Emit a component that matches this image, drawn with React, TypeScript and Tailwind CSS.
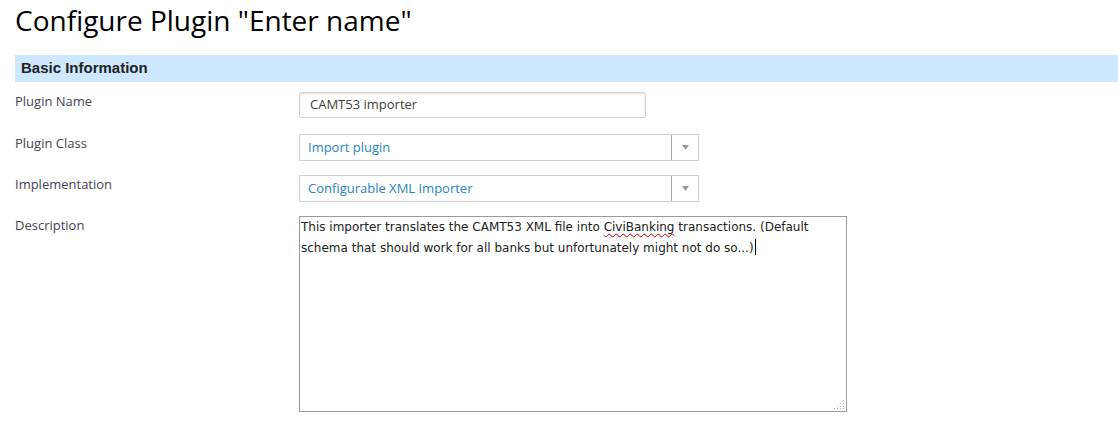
import { ReactNode } from 'react'

const labelFont = { fontFamily: '"Open Sans", sans-serif' }

function Row({ label, children, className }: { label: string; children: ReactNode; className?: string }) {
  return (
    <div className={`flex ${className ?? ''}`}>
      <div className="w-[284px] shrink-0 text-[13px] leading-[18px] text-[#464354]" style={labelFont}>
        {label}
      </div>
      <div>{children}</div>
    </div>
  )
}

function SelectBox({ value }: { value: string }) {
  return (
    <div className="flex h-[27px] w-[400px] border border-[#cfcfcf] bg-white">
      <div className="flex flex-1 items-center pl-2 text-[13px] text-[#2786c2]" style={labelFont}>
        {value}
      </div>
      <div className="flex w-[27px] items-center justify-center border-l border-[#aaaaaa]">
        <svg width="7" height="5" viewBox="0 0 7 5">
          <path d="M0 0h7L3.5 5z" fill="#9a9a9a" />
        </svg>
      </div>
    </div>
  )
}

export default function App() {
  return (
    <div className="h-[426px] w-[1118px] bg-white pl-[15px]">
      <h1 className="pt-[3px] text-[28px] leading-[35px] text-black" style={labelFont}>
        Configure Plugin "Enter name"
      </h1>

      <div className="mt-[17px] flex h-[27px] items-center bg-[#cde8fe] pl-[6px]">
        <span className="text-[15px] font-bold text-[#222222]" style={{ fontFamily: '"Liberation Sans", Arial, sans-serif' }}>
          Basic Information
        </span>
      </div>

      <div className="mt-[10px] flex flex-col">
        <Row label="Plugin Name">
          <div
            className="flex h-[26px] w-[347px] items-center rounded-[2px] border border-[#d3d3d3] pl-[10px] text-[13px] text-[#3e3e3e] shadow-[inset_0_1px_2px_rgba(0,0,0,0.12)]"
            style={labelFont}
          >
            CAMT53 importer
          </div>
        </Row>
        <Row label="Plugin Class" className="mt-[16px]">
          <SelectBox value="Import plugin" />
        </Row>
        <Row label="Implementation" className="mt-[14px]">
          <SelectBox value="Configurable XML Importer" />
        </Row>
        <Row label="Description" className="mt-[14px]">
          <div className="relative h-[196px] w-[548px] border border-[#9a9a9a] px-[1px] pt-[1px] text-[12px] leading-[18px] text-[#222222]" style={{ fontFamily: '"DejaVu Sans", sans-serif' }}>
            This importer translates the CAMT53 XML file into{' '}
            <span className="underline decoration-wavy decoration-[#d40000] decoration-1 underline-offset-2">CiviBanking</span>{' '}
            transactions. (Default schema that should work for all banks but unfortunately might not do so...)
            <span className="ml-[1px] inline-block h-[16px] w-px translate-y-[3px] bg-black" />
            <svg className="absolute bottom-[1px] right-[1px]" width="11" height="11" viewBox="0 0 11 11">
              <g fill="#b0b0b0">
                <rect x="9" y="1" width="1" height="1" />
                <rect x="6" y="4" width="1" height="1" />
                <rect x="9" y="4" width="1" height="1" />
                <rect x="3" y="7" width="1" height="1" />
                <rect x="6" y="7" width="1" height="1" />
                <rect x="9" y="7" width="1" height="1" />
                <rect x="0" y="9" width="1" height="1" />
                <rect x="3" y="9" width="1" height="1" />
                <rect x="6" y="9" width="1" height="1" />
                <rect x="9" y="9" width="1" height="1" />
              </g>
            </svg>
          </div>
        </Row>
      </div>
    </div>
  )
}
